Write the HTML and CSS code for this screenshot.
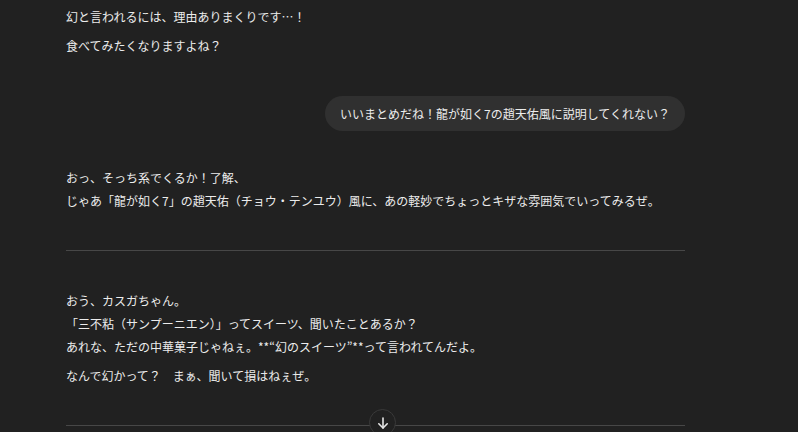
FILE: index.html
```html
<!DOCTYPE html>
<html lang="ja">
<head>
    <meta charset="UTF-8">
    <meta name="viewport" content="width=device-width, initial-scale=1.0">
    <title>ChatGPT</title>
    <link rel="stylesheet" href="styles.css">
</head>
<body>
    <main class="thread">
        <div class="message bot-message">
            <p>幻と言われるには、理由ありまくりです…！</p>
            <p>食べてみたくなりますよね？</p>
        </div>

        <div class="message user-message">
            <div class="bubble">いいまとめだね！龍が如く7の趙天佑風に説明してくれない？</div>
        </div>

        <div class="message bot-message">
            <p>おっ、そっち系でくるか！了解、<br>じゃあ「龍が如く7」の趙天佑（チョウ・テンユウ）風に、あの軽妙でちょっとキザな雰囲気でいってみるぜ。</p>
        </div>

        <hr class="divider">

        <div class="message bot-message">
            <p>おう、カスガちゃん。<br>「三不粘（サンプーニエン）」ってスイーツ、聞いたことあるか？<br>あれな、ただの中華菓子じゃねぇ。**“幻のスイーツ”**って言われてんだよ。</p>
            <p>なんで幻かって？　まぁ、聞いて損はねぇぜ。</p>
        </div>

        <hr class="divider">
    </main>

    <button class="scroll-down" aria-label="下へスクロール">
        <svg width="14" height="14" viewBox="0 0 14 14" fill="none" stroke="currentColor" stroke-width="1.6" stroke-linecap="round" stroke-linejoin="round">
            <path d="M7 2v10"/>
            <path d="M2.8 7.8 7 12l4.2-4.2"/>
        </svg>
    </button>
</body>
</html>
```

FILE: styles.css
```css
body {
    margin: 0;
    padding: 0;
    background-color: #212121;
    color: #ececec;
    font-family: "Noto Sans CJK JP", "Noto Sans", sans-serif;
    font-size: 12px;
    line-height: 23px;
    overflow: hidden;
}

.thread {
    width: 619px;
    margin-left: 66px;
    padding-top: 5px;
}

.message p {
    margin: 0 0 6px 0;
}
.message p:last-child {
    margin-bottom: 0;
}

/* user bubble on the right */
.user-message {
    display: flex;
    justify-content: flex-end;
    margin: 39px 0 35px 0;
}
.bubble {
    background-color: #303030;
    border-radius: 18px;
    padding: 6px 15px;
    line-height: 23px;
}

.divider {
    border: none;
    border-top: 1px solid #474747;
    margin: 38px 0;
}

/* floating scroll button */
.scroll-down {
    position: fixed;
    left: 369px;
    top: 409px;
    width: 27px;
    height: 27px;
    padding: 0;
    border-radius: 50%;
    border: 1px solid #3a3a3a;
    background-color: #212121;
    color: #e6e6e6;
    display: flex;
    align-items: center;
    justify-content: center;
}
```
